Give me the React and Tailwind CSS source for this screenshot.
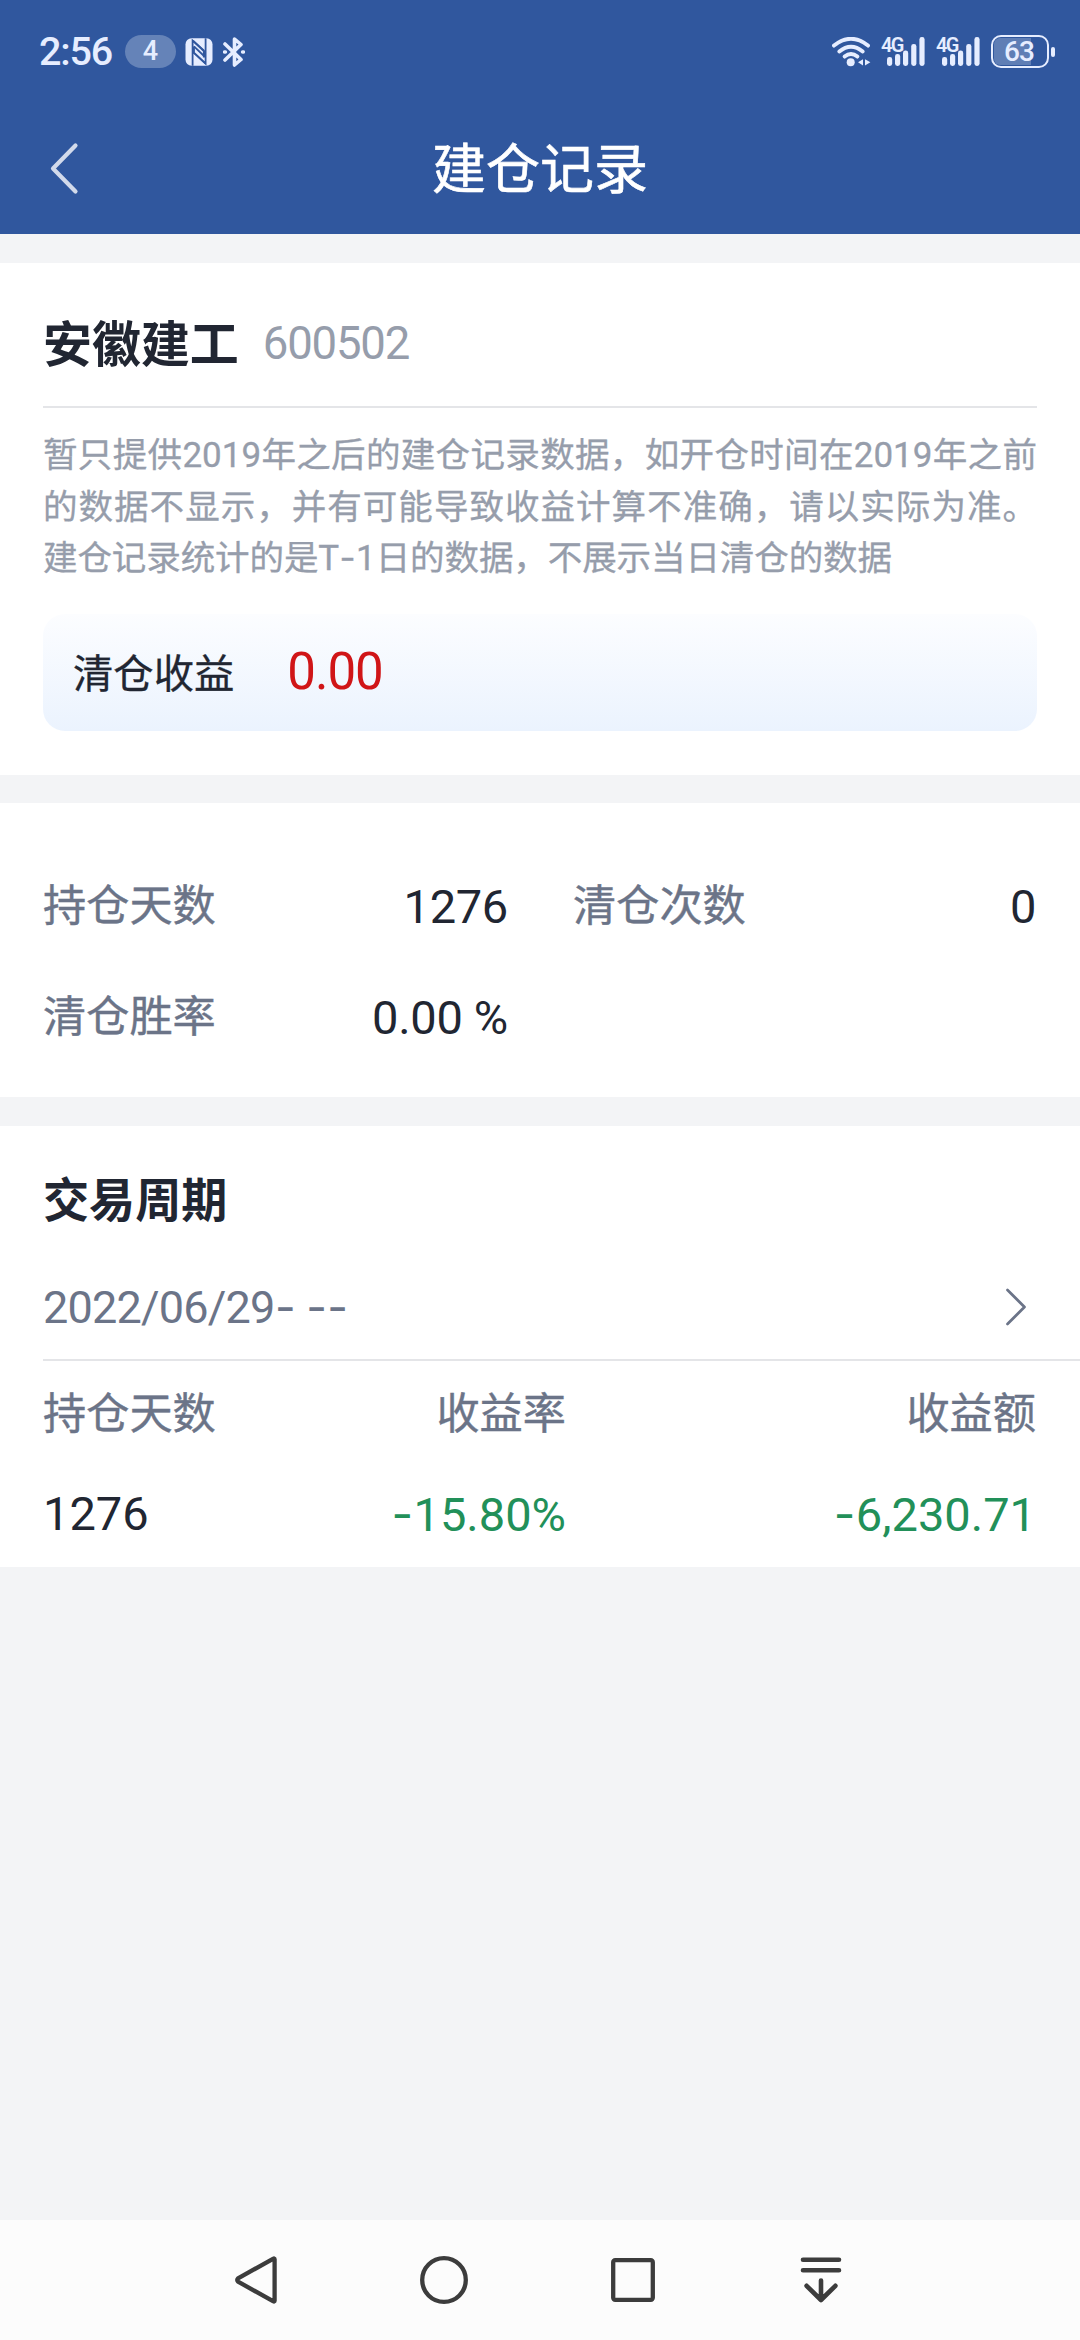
import React from "react";

const LABEL = "-mt-[3px] text-[43.2px] leading-[60px] text-[#6b7488] whitespace-nowrap [-webkit-text-stroke:0.4px]";
const NUM = "font-['Roboto','Noto_Sans_CJK_SC',sans-serif] whitespace-nowrap";

// Wide, low dash used in dates and negative amounts
function Dash() {
  return <span className="px-[0.5px] font-['Inter',sans-serif]">-</span>;
}

function Signal() {
  return (
    <div className="relative w-[45px] h-[30px] text-[#e6edff]">
      <span className="absolute left-0 -top-[2px] font-['Roboto',sans-serif] font-semibold text-[20px] leading-[20px] tracking-[-1.8px]">
        4G
      </span>
      <svg className="absolute inset-0" width="45" height="30" viewBox="0 0 45 30" fill="currentColor">
        <rect x="6" y="20" width="5.2" height="9" rx="2.4" />
        <rect x="14" y="17" width="5.2" height="12" rx="2.4" />
        <rect x="22" y="13.5" width="5.2" height="15.5" rx="2.4" />
        <rect x="30.2" y="7" width="5.2" height="22" rx="2.4" />
        <rect x="38.4" y="0" width="5.2" height="29" rx="2.4" />
      </svg>
    </div>
  );
}

function StatusBar() {
  return (
    <div className="flex h-[103px] items-center text-[#e6edff]">
      <div className="flex items-center pl-[39px]">
        <span className="w-[86px] font-['Roboto',sans-serif] font-medium text-[39.5px] leading-[40px] tracking-[-1.2px]">
          2:56
        </span>
        <span className="flex h-[33px] w-[51px] items-center justify-center rounded-full bg-[#6583b8] font-['Roboto',sans-serif] font-medium text-[27px] leading-[33px]">
          4
        </span>
        <svg className="ml-[9px]" width="28" height="28" viewBox="0 0 28 28">
          <rect x="0.5" y="0.3" width="27" height="27.4" rx="6" fill="#e6edff" />
          <path d="M7.6 27.7V2.6L18.8 13V19.5M20.6 .3V25.6L9 14.8V8.5" fill="none" stroke="#30579e" strokeWidth="1.8" />
          <path d="M9 8.3L19 18M9 14.8L20.4 25.4M8 2.6L19 12.6" fill="none" stroke="#30579e" strokeWidth="1.8" />
        </svg>
        <svg className="ml-[10px]" width="22" height="32" viewBox="0 0 22 32" fill="none" stroke="#e6edff" strokeWidth="3.6" strokeLinejoin="round" strokeLinecap="round">
          <path d="M2 8L18 23.5L11.5 29V3L18 8.5L2 24" />
          <path d="M1.6 16h.8M19.6 16h.8" />
        </svg>
      </div>
      <div className="ml-auto flex items-center pr-[25px]">
        <svg width="40" height="30" viewBox="0 0 40 30" fill="none" stroke="#e6edff" strokeWidth="3.9" strokeLinecap="round">
          <path d="M2 8.6Q19 -5 36 8.6" />
          <path d="M7.3 14.5Q19 4.8 30.7 14.5" />
          <path d="M12.6 19.6Q19 14.2 25.4 19.6" />
          <circle cx="18.7" cy="25.2" r="4" fill="#e6edff" stroke="none" />
          <path d="M31 22.2V28.4L26 25.3ZM33 22.2L38.4 25.3L33 28.4Z" fill="#e6edff" stroke="none" />
        </svg>
        <div className="ml-[9px]"><Signal /></div>
        <div className="ml-[10px]"><Signal /></div>
        <div className="ml-[10px] flex h-[33px] w-[58px] items-center rounded-[10px] border-[2.5px] border-[#e6edff] p-[1px]">
          <div className="flex h-full w-[37px] items-center rounded-l-[6px] bg-[#5f7eb5]">
            <span className="pl-[10px] font-['Roboto',sans-serif] font-medium text-[28px] leading-[28px] tracking-[-1px]">63</span>
          </div>
        </div>
        <div className="ml-[2px] h-[10px] w-[4px] rounded-full bg-[#e6edff]" />
      </div>
    </div>
  );
}

function TitleBar() {
  return (
    <div className="grid h-[131px] grid-cols-[200px_1fr_200px] items-center">
      <svg className="ml-[49px]" width="32" height="56" viewBox="0 0 32 56" fill="none" stroke="#d2daeb" strokeWidth="4.2" strokeLinecap="round" strokeLinejoin="round">
        <path d="M26.5 4.5L4 27.5L26.5 50.5" />
      </svg>
      <h1 className="-mt-[6px] text-center text-[54px] leading-[80px] text-white [-webkit-text-stroke:0.6px]">建仓记录</h1>
    </div>
  );
}

function NavBar() {
  return (
    <nav className="flex h-[120px] items-center justify-between bg-[#fcfcfc] pl-[232px] pr-[235px]">
      <svg width="48" height="48" viewBox="0 0 48 48" fill="none" stroke="#3c3c3c" strokeWidth="4.3" strokeLinejoin="round">
        <path d="M42.6 3.2Q42.6 2 41 2.8L6 22.4Q4.6 24 6 25.6L41 45.2Q42.6 46 42.6 44.8Z" />
      </svg>
      <svg width="48" height="48" viewBox="0 0 48 48" fill="none" stroke="#3c3c3c" strokeWidth="4.3">
        <circle cx="24" cy="24" r="21.8" />
      </svg>
      <svg width="48" height="48" viewBox="0 0 48 48" fill="none" stroke="#3c3c3c" strokeWidth="4.3">
        <rect x="4.2" y="4.2" width="39.6" height="39.6" rx="2" />
      </svg>
      <svg width="48" height="48" viewBox="0 0 48 48" fill="none" stroke="#3c3c3c" strokeWidth="4.6" strokeLinecap="round" strokeLinejoin="round">
        <path d="M6 3.8H42M6 14.2H42M24 24.5V43.5M9.6 29.8L24 44L38.4 29.8" />
      </svg>
    </nav>
  );
}

function Stat({ label, children }) {
  return (
    <div className="flex h-[111px] items-center justify-between">
      <span className={LABEL}>{label}</span>
      <span className={`${NUM} pt-[6px] text-[47px] leading-[60px] tracking-[-0.3px] text-[#212632]`}>{children}</span>
    </div>
  );
}

export default function App() {
  return (
    <div className="flex h-[2340px] w-[1080px] flex-col overflow-hidden bg-[#f3f4f6] font-['Noto_Sans_CJK_SC',sans-serif]">
      <header className="h-[234px] bg-[#30579e]">
        <StatusBar />
        <TitleBar />
      </header>

      <section className="mt-[29px] h-[512px] bg-white px-[43px]">
        <div className="flex h-[145px] items-center border-b-2 border-[#e4e5e8] pt-[12px]">
          <h2 className="text-[48.96px] font-bold leading-[70px] text-[#212632]">安徽建工</h2>
          <span className={`${NUM} ml-[24px] pt-[7px] text-[45.5px] leading-[70px] tracking-[-1.2px] text-[#969dab]`}>600502</span>
        </div>
        <div className="mt-[19px] text-[34.56px] leading-[51.6px] text-[#969dab] [-webkit-text-stroke:0.3px] [&_b]:font-normal [&_b]:font-['Roboto'] [&_b]:text-[35px] [&_b]:leading-none [&_p]:h-[51.6px]">
          <p className="whitespace-nowrap [text-align-last:justify]">暂只提供<b>2019</b>年之后的建仓记录数据，如开仓时间在<b>2019</b>年之前</p>
          <p className="whitespace-nowrap [text-align-last:justify]">的数据不显示，并有可能导致收益计算不准确，请以实际为准。</p>
          <p className="whitespace-nowrap tracking-[-0.13px]">建仓记录统计的是<b>T<Dash />1</b>日的数据，不展示当日清仓的数据</p>
        </div>
        <div className="mt-[32px] flex h-[117px] items-center rounded-[22px] bg-linear-to-b from-[#fcfdff] to-[#ebf3fe] pl-[30px]">
          <span className="-mt-[2px] text-[40.32px] leading-[60px] text-[#212632] [-webkit-text-stroke:0.3px]">清仓收益</span>
          <span className={`${NUM} -mt-[1px] ml-[53px] text-[51px] leading-[60px] tracking-[-1px] text-[#d01517]`}>0.00</span>
        </div>
      </section>

      <section className="mt-[28px] grid h-[294px] grid-cols-[465px_463px] content-start gap-x-[65px] bg-white px-[43px] pt-[45px]">
        <Stat label="持仓天数">1276</Stat>
        <Stat label="清仓次数">0</Stat>
        <Stat label="清仓胜率">0.00 %</Stat>
      </section>

      <section className="mt-[29px] h-[441px] bg-white pl-[43px]">
        <h2 className="pt-[36px] text-[46.08px] font-bold leading-[70px] text-[#212632]">交易周期</h2>
        <div className="flex h-[129px] items-center justify-between border-b-2 border-[#e4e5e8] pr-[53px] pt-[23px]">
          <span className={`${NUM} text-[45px] leading-[60px] tracking-[-0.8px] text-[#6b7488]`}>
            2022/06/29<Dash /> <Dash /><Dash />
          </span>
          <svg width="22" height="38" viewBox="0 0 22 38" fill="none" stroke="#6b7488" strokeWidth="2.7" strokeLinecap="round" strokeLinejoin="round">
            <path d="M2.5 2L19.5 19L2.5 36" />
          </svg>
        </div>
        <div className="grid grid-cols-[200px_323px_470px] pt-[22px] [&>*:nth-child(3n)]:text-right [&>*:nth-child(3n+2)]:text-right">
          <span className={LABEL}>持仓天数</span>
          <span className={LABEL}>收益率</span>
          <span className={LABEL}>收益额</span>
          <span className={`${NUM} mt-[44px] text-[47px] leading-[60px] text-[#212632]`}>1276</span>
          <span className={`${NUM} mt-[44px] text-[47px] leading-[60px] text-[#229059]`}><Dash />15.80%</span>
          <span className={`${NUM} mt-[44px] text-[47px] leading-[60px] text-[#229059]`}><Dash />6,230.71</span>
        </div>
      </section>

      <div className="flex-1" />
      <NavBar />
    </div>
  );
}
